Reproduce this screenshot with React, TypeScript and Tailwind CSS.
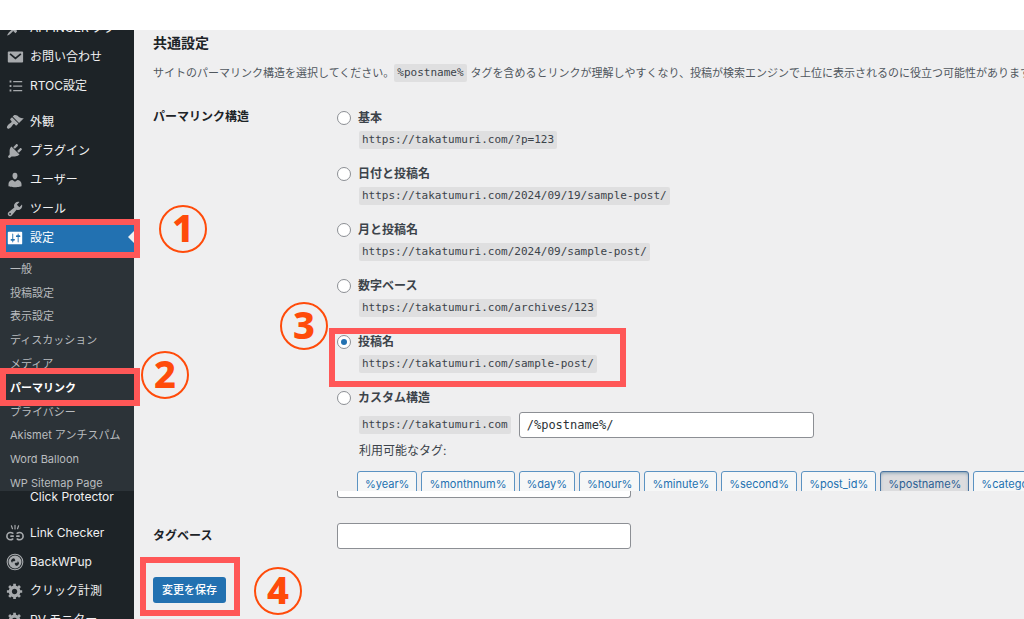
import { useState, type ReactNode } from "react";

type IconName =
    | "pin" | "mail" | "list" | "appearance" | "plugins" | "users"
    | "tools" | "settings" | "broken" | "backup" | "gear";

const icons: Record<IconName, ReactNode> = {
    pin: (
        <path d="M10.44 3.02l1.82-1.82 6.36 6.35-1.83 1.82c-1.05-.68-2.48-.57-3.41.36l-.75.75c-.92.93-1.04 2.35-.35 3.41l-1.83 1.82-2.41-2.41-2.8 2.79c-.42.42-3.38 2.71-3.8 2.29s1.86-3.39 2.28-3.81l2.79-2.79L4.1 9.36l1.83-1.82c1.05.69 2.48.57 3.4-.36l.75-.75c.93-.92 1.05-2.35.36-3.41z" />
    ),
    mail: (
        <>
            <rect x="2" y="4" width="17" height="12" rx="1" />
            <path d="M4.5 6.5l6 5 6-5" fill="none" stroke="#1d2327" strokeWidth="2" />
        </>
    ),
    list: (
        <path d="M4 4h2v2H4zM8 4.5h10v1.2H8zM4 9h2v2H4zM8 9.5h10v1.2H8zM4 14h2v2H4zM8 14.5h10v1.2H8z" />
    ),
    appearance: (
        <path d="M14.48 11.06L7.41 3.99l1.5-1.5c.5-.56 2.3-.47 3.51.32 1.21.8 1.43 1.28 2.91 2.1 1.18.64 2.45 1.26 4.45.85zm-.71.71L6.7 4.7 4.93 6.47c-.39.39-.39 1.02 0 1.41l1.06 1.06c.39.39.39 1.03 0 1.42-.6.6-1.43 1.11-2.21 1.69-.35.26-.7.53-1.01.84C1.43 14.23.4 16.08 1.4 17.07c.99 1 2.84-.03 4.18-1.36.31-.31.58-.66.85-1.02.57-.78 1.08-1.61 1.69-2.21.39-.39 1.02-.39 1.41 0l1.06 1.06c.39.39 1.02.39 1.41 0z" />
    ),
    plugins: (
        <path d="M13.11 4.36L9.87 7.6 8 5.73l3.24-3.24c.35-.34 1.05-.2 1.56.32.52.51.66 1.21.31 1.55zm-8 1.77l.91-1.12 9.01 9.01-1.19.84c-.71.71-2.63 1.16-3.82 1.16H6.14L4.9 17.26c-.59.59-1.54.59-2.12 0-.59-.58-.59-1.53 0-2.12l1.24-1.24v-3.88c0-1.13.4-3.19 1.09-3.89zm7.26 3.97l3.24-3.24c.34-.35 1.04-.21 1.55.31.52.51.66 1.21.31 1.55l-3.24 3.25z" />
    ),
    users: (
        <path d="M10 9.25c-2.27 0-2.73-3.44-2.73-3.44C7 4.02 7.82 2 9.97 2c2.16 0 2.98 2.02 2.71 3.81 0 0-.41 3.44-2.68 3.44zm0 2.57L12.72 10c2.39 0 4.52 2.33 4.52 4.53v2.49s-3.65 1.13-7.24 1.13c-3.65 0-7.24-1.13-7.24-1.13v-2.49c0-2.25 1.94-4.48 4.47-4.48z" />
    ),
    tools: (
        <path d="M16.68 9.77c-1.34 1.34-3.3 1.67-4.95.99l-5.41 6.52c-.99.99-2.59.99-3.58 0s-.99-2.59 0-3.57l6.52-5.42c-.68-1.65-.35-3.61.99-4.95 1.28-1.28 3.12-1.62 4.72-1.06l-2.89 2.89 2.82 2.82 2.86-2.87c.53 1.58.18 3.39-1.08 4.65zM3.81 16.21c.4.39 1.04.39 1.43 0 .4-.4.4-1.04 0-1.43-.39-.4-1.03-.4-1.43 0-.39.39-.39 1.03 0 1.43z" />
    ),
    settings: (
        <path d="M18 16V4c0-.55-.45-1-1-1H3c-.55 0-1 .45-1 1v12c0 .55.45 1 1 1h14c.55 0 1-.45 1-1zM8 11h1c.55 0 1 .45 1 1s-.45 1-1 1H8v1.5c0 .28-.22.5-.5.5s-.5-.22-.5-.5V13H6c-.55 0-1-.45-1-1s.45-1 1-1h1V5.5c0-.28.22-.5.5-.5s.5.22.5.5V11zm5-2h-1c-.55 0-1-.45-1-1s.45-1 1-1h1V5.5c0-.28.22-.5.5-.5s.5.22.5.5V7h1c.55 0 1 .45 1 1s-.45 1-1 1h-1v5.5c0 .28-.22.5-.5.5s-.5-.22-.5-.5V9z" />
    ),
    broken: (
        <g fill="none" stroke="currentColor" strokeWidth="1.8" strokeLinecap="round">
            <path d="M7.5 10.2C6.800 9.700 6 9.500 5 9.500c-2.200 0-4 1.800-4 4s1.800 4 4 4c1 0 1.800-.3 2.500-.8M5.500 13.500h2.500" />
            <path d="M12.500 10.200c.7-.5 1.500-.7 2.500-.7 2.200 0 4 1.800 4 4s-1.800 4-4 4c-1 0-1.800-.3-2.500-.8M12 13.500h2.500" />
            <path d="M10 1.500v4M6 2l1.200 3.300M14 2l-1.200 3.300" strokeWidth="1.3" />
        </g>
    ),
    backup: (
        <>
            <circle cx="10" cy="10" r="8.7" fill="none" stroke="currentColor" strokeWidth="1.2" />
            <circle cx="10" cy="10" r="7.2" />
            <path d="M5.5 9c.3-2 1.700-3.300 3.500-3.300L10.500 8 9 9.500c-1.500-.8-2.300.3-2 2zM14.500 11c-.3 2-1.700 3.300-3.500 3.300L9.500 12l1.500-1.500c1.500.8 2.300-.3 2-2z" fill="#1d2327" />
        </>
    ),
    gear: (
        <path d="M18 12h-2.18c-.17.7-.44 1.35-.81 1.93l1.54 1.54-2.1 2.1-1.54-1.54c-.58.36-1.23.63-1.91.79V19H8v-2.18c-.68-.16-1.33-.43-1.91-.79l-1.54 1.54-2.12-2.12 1.54-1.54c-.36-.58-.63-1.23-.79-1.91H1V9.03h2.17c.16-.7.44-1.35.8-1.94L2.43 5.55l2.1-2.1 1.54 1.54c.58-.37 1.24-.64 1.93-.81V2h3v2.18c.68.16 1.33.43 1.91.79l1.54-1.54 2.12 2.12-1.54 1.54c.36.59.64 1.24.8 1.94H18V12zm-8.5 1.5c1.66 0 3-1.34 3-3s-1.34-3-3-3-3 1.34-3 3 1.34 3 3 3z" />
    ),
};

function Icon({ name }: { name: IconName }) {
    return (
        <svg viewBox="0 0 20 20" fill="currentColor" className="size-[18px] shrink-0" aria-hidden="true">
            {icons[name]}
        </svg>
    );
}

function MenuItem({ icon, label, current = false }: { icon: IconName; label: string; current?: boolean }) {
    return (
        <a
            href="#"
            className={
                current
                    ? "relative flex h-[29px] shrink-0 items-center gap-1.5 bg-[#2271b1] pl-1.5 text-xs whitespace-nowrap text-white"
                    : "flex h-[29px] shrink-0 items-center gap-1.5 pl-1.5 text-xs whitespace-nowrap text-[#f0f0f1]"
            }
        >
            <span className={current ? "text-white" : "text-[#a7aaad]"}>
                <Icon name={icon} />
            </span>
            {label}
            {current && (
                <span className="absolute top-2 right-0 border-y-[6px] border-r-[6px] border-y-transparent border-r-[#f0f0f1]" />
            )}
        </a>
    );
}

const submenu = [
    "一般", "投稿設定", "表示設定", "ディスカッション", "メディア",
    "パーマリンク", "プライバシー", "Akismet アンチスパム", "Word Balloon", "WP Sitemap Page",
];

const structures = [
    { id: "plain", label: "基本", example: "https://takatumuri.com/?p=123" },
    { id: "day", label: "日付と投稿名", example: "https://takatumuri.com/2024/09/19/sample-post/" },
    { id: "month", label: "月と投稿名", example: "https://takatumuri.com/2024/09/sample-post/" },
    { id: "numeric", label: "数字ベース", example: "https://takatumuri.com/archives/123" },
    { id: "postname", label: "投稿名", example: "https://takatumuri.com/sample-post/" },
];

const tags = [
    "%year%", "%monthnum%", "%day%", "%hour%", "%minute%",
    "%second%", "%post_id%", "%postname%", "%category%",
];

function Code({ children }: { children: ReactNode }) {
    return (
        <code className="inline-flex h-[18px] items-center rounded-xs bg-[#dfdfe0] px-[3px] font-['DejaVu_Sans_Mono',monospace] text-[11px] whitespace-nowrap text-[#3c434a]">
            {children}
        </code>
    );
}

function Option({ id, label, checked, onSelect }: { id: string; label: string; checked: boolean; onSelect: () => void }) {
    return (
        <label className="flex h-6 items-center gap-[7px] text-xs font-bold text-[#3c434a]">
            <input
                type="radio"
                name="structure"
                value={id}
                checked={checked}
                onChange={onSelect}
                className="flex size-3.5 appearance-none items-center justify-center rounded-full border border-[#8c8f94] bg-white checked:before:size-1.5 checked:before:rounded-full checked:before:bg-[#2271b1] checked:before:content-['']"
            />
            {label}
        </label>
    );
}

// 手順番号
function Step({ n, className }: { n: number; className: string }) {
    return (
        <span
            className={`absolute flex size-12 items-center justify-center rounded-full border-2 border-[#ff4b0a] pb-1 font-['Noto_Sans',sans-serif] text-[38px] leading-none font-extrabold text-[#ff4b0a] ${className}`}
        >
            {n}
        </span>
    );
}

// 赤枠
function Frame({ className }: { className: string }) {
    return <span className={`pointer-events-none absolute border-6 border-[#ff5757] ${className}`} />;
}

export default function App() {
    const [structure, setStructure] = useState<string>("postname");
    const [custom, setCustom] = useState<string>("/%postname%/");
    const [tagBase, setTagBase] = useState<string>("");

    return (
        <div className="relative flex h-screen flex-col overflow-hidden bg-white pt-[30px] font-[Inter,'Noto_Sans_CJK_JP',sans-serif] text-[#1d2327]">
            {/* 上半分 */}
            <div className="flex shrink-0 overflow-hidden">
                <nav className="flex w-[134px] shrink-0 flex-col bg-[#1d2327]">
                    <div className="flex h-3 items-end overflow-hidden">
                        <MenuItem icon="pin" label="AFFINGER タグ" />
                    </div>
                    <MenuItem icon="mail" label="お問い合わせ" />
                    <MenuItem icon="list" label="RTOC設定" />
                    <div className="mt-[7px] flex flex-col">
                        <MenuItem icon="appearance" label="外観" />
                        <MenuItem icon="plugins" label="プラグイン" />
                        <MenuItem icon="users" label="ユーザー" />
                        <MenuItem icon="tools" label="ツール" />
                        <MenuItem icon="settings" label="設定" current />
                    </div>
                    <ul className="-mb-1 flex flex-1 flex-col bg-[#2c3338] pt-[5px] pl-2.5 text-[11px] leading-4 text-[#b9bcbf]">
                        {submenu.map((item) => (
                            <li key={item} className="flex flex-1 items-center whitespace-nowrap">
                                <a href="#" className={item === "パーマリンク" ? "font-bold text-white" : ""}>
                                    {item}
                                </a>
                            </li>
                        ))}
                    </ul>
                </nav>

                <main className="min-w-0 flex-1 overflow-hidden bg-[#efeff0] pt-[3px] pl-[19px]">
                    <h2 className="text-sm leading-5 font-bold">共通設定</h2>
                    <p className="mt-[11px] flex h-[18px] items-center text-[11px] whitespace-nowrap text-[#50575e]">
                        サイトのパーマリンク構造を選択してください。
                        <Code>%postname%</Code>
                        <span className="ml-1">
                            タグを含めるとリンクが理解しやすくなり、投稿が検索エンジンで上位に表示されるのに役立つ可能性があります。
                        </span>
                    </p>

                    <div className="mt-6 flex">
                        <h3 className="w-[184px] shrink-0 text-xs leading-[22px] font-bold">パーマリンク構造</h3>
                        <div className="min-w-0 flex-1">
                            {structures.map((s) => (
                                <div key={s.id} className="flex h-14 flex-col">
                                    <Option
                                        id={s.id}
                                        label={s.label}
                                        checked={structure === s.id}
                                        onSelect={() => setStructure(s.id)}
                                    />
                                    <div className="mt-px ml-[22px] flex">
                                        <Code>{s.example}</Code>
                                    </div>
                                </div>
                            ))}

                            <Option
                                id="custom"
                                label="カスタム構造"
                                checked={structure === "custom"}
                                onSelect={() => setStructure("custom")}
                            />
                            <div className="mt-0.5 ml-[22px] flex items-center gap-2">
                                <Code>https://takatumuri.com</Code>
                                <input
                                    type="text"
                                    aria-label="カスタム構造"
                                    value={custom}
                                    onChange={(e) => setCustom(e.target.value)}
                                    className="h-[26px] w-[295px] rounded-[3px] border border-[#8c8f94] bg-white px-[7px] font-['DejaVu_Sans_Mono',monospace] text-xs text-[#2c3338]"
                                />
                            </div>
                            <p className="mt-[5px] ml-[22px] text-xs leading-4 text-[#3c434a]">利用可能なタグ:</p>
                            <div className="mt-3 ml-5 flex h-5 gap-1 overflow-hidden">
                                {tags.map((tag) => (
                                    <button
                                        key={tag}
                                        type="button"
                                        className={
                                            tag === "%postname%"
                                                ? "h-[26px] shrink-0 rounded-[3px] border border-[#4a74a0] bg-[#dcdcde] px-[7px] text-[11px] text-[#2c6094] shadow-[inset_0_2px_5px_-3px_#0a4b78]"
                                                : "h-[26px] shrink-0 rounded-[3px] border border-[#5b93c2] bg-[#f6f7f7] px-[7px] text-[11px] text-[#2271b1]"
                                        }
                                    >
                                        {tag}
                                    </button>
                                ))}
                            </div>
                        </div>
                    </div>
                </main>
            </div>

            {/* 下半分 */}
            <div className="flex min-h-0 flex-1">
                <nav className="flex w-[134px] shrink-0 flex-col overflow-hidden bg-[#1d2327]">
                    <a href="#" className="pl-[30px] text-xs leading-3 whitespace-nowrap text-[#f0f0f1]">
                        Click Protector
                    </a>
                    <div className="mt-[15px] flex flex-col">
                        <MenuItem icon="broken" label="Link Checker" />
                        <MenuItem icon="backup" label="BackWPup" />
                        <MenuItem icon="gear" label="クリック計測" />
                        <MenuItem icon="gear" label="PV モニター" />
                    </div>
                </nav>

                <main className="min-w-0 flex-1 bg-[#efeff0] pl-[19px]">
                    <div className="ml-[184px] h-[7px] w-[294px] rounded-b-[3px] border border-t-0 border-[#8c8f94] bg-white" />
                    <div className="mt-[25px] flex items-center">
                        <label htmlFor="tag-base" className="w-[184px] shrink-0 text-xs font-bold">
                            タグベース
                        </label>
                        <input
                            id="tag-base"
                            type="text"
                            value={tagBase}
                            onChange={(e) => setTagBase(e.target.value)}
                            className="h-[26px] w-[294px] rounded-[3px] border border-[#8c8f94] bg-white px-[7px] text-xs"
                        />
                    </div>
                    <button
                        type="button"
                        className="mt-7 h-[26px] rounded-[3px] bg-[#2271b1] px-[9px] text-[11px] font-medium text-white"
                    >
                        変更を保存
                    </button>
                </main>
            </div>

            <Frame className="top-[219px] left-0 h-[39px] w-[140px]" />
            <Step n={1} className="top-[205px] left-[159px]" />
            <Frame className="top-[368px] left-0 h-[38px] w-[140px]" />
            <Step n={2} className="top-[351px] left-[141px]" />
            <Frame className="top-[328px] left-[329px] h-[59px] w-[297px]" />
            <Step n={3} className="top-[302px] left-[280px]" />
            <Frame className="top-[557px] left-[140px] h-[59px] w-[100px]" />
            <Step n={4} className="top-[567px] left-[254px]" />
        </div>
    );
}
